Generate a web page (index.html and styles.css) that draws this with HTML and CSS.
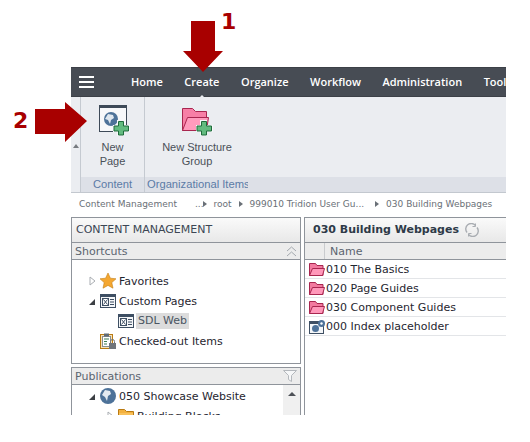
FILE: index.html
```html
<!DOCTYPE html>
<html>
<head>
  <meta charset="UTF-8">
  <title>Create tab</title>
  <link rel="stylesheet" href="styles.css">
</head>
<body>
  <svg class="callout callout-down" width="40" height="51" viewBox="0 0 40 51"><path d="M8 0H32V30H40L20 51L0 30H8Z" fill="#a80000"/></svg>
  <div class="callout callout-num-1">1</div>
  <svg class="callout callout-right" width="52" height="40" viewBox="0 0 52 40"><path d="M0 7H30V0L52 19L30 40V32H0Z" fill="#a80000"/></svg>
  <div class="callout callout-num-2">2</div>

  <div class="app">
    <div class="topbar">
      <div class="burger"><span></span><span></span><span></span></div>
      <div class="nav">
        <span>Home</span>
        <span class="nav-active">Create</span>
        <span>Organize</span>
        <span>Workflow</span>
        <span>Administration</span>
        <span>Tools</span>
      </div>
    </div>

    <div class="ribbon">
      <div class="ribbon-scroll"><div class="scroll-up"></div></div>
      <div class="group group-content">
        <div class="group-main">
          <div class="ribbon-btn">
            <svg width="32" height="31" viewBox="0 0 32 31">
              <rect x="0.5" y="0.5" width="27" height="26" fill="#f7f8fa" stroke="#3e4a58"/>
              <rect x="0" y="0" width="28" height="3" fill="#3e4a58"/>
              <circle cx="12" cy="14" r="7" fill="#4d7299"/>
              <path d="M9 9l5 1 1 3-3 2-1 4-2-4-3-1z" fill="#dfe7ef"/>
              <path d="M18 15h7v5h6v7h-6v4h-7v-4h-4v-7h4z" fill="#f7f8fa"/>
              <path d="M19.500 16.500h5v4.500h5v5h-5v4h-5v-4h-4.500v-5h4.500z" fill="#62bb7f" stroke="#1f6b3c"/>
            </svg>
            <div class="btn-label">New<br>Page</div>
          </div>
        </div>
        <div class="group-label">Content</div>
      </div>
      <div class="group group-org">
        <div class="group-main">
          <div class="ribbon-btn btn-wide">
            <svg width="32" height="31" viewBox="0 0 32 31">
              <path d="M0.500 3.500h10l3 3h11v19h-24z" fill="#f77fa6" stroke="#a8264f"/>
              <path d="M0.500 25.500l5-13h21l-2 13z" fill="#ff9bbd" stroke="#a8264f"/>
              <path d="M18 15h7v5h6v7h-6v4h-7v-4h-4v-7h4z" fill="#f7f8fa"/>
              <path d="M19.500 16.500h5v4.500h5v5h-5v4h-5v-4h-4.500v-5h4.500z" fill="#62bb7f" stroke="#1f6b3c"/>
            </svg>
            <div class="btn-label">New Structure<br>Group</div>
          </div>
        </div>
        <div class="group-label">Organizational Items</div>
      </div>
      <div class="group group-rest">
        <div class="group-main"></div>
        <div class="group-label"></div>
      </div>
    </div>

    <div class="crumbs">
      <span class="crumb-root">Content Management</span>
      <span class="crumb-more">...</span><i class="crumb-arrow"></i>
      <span>root</span><i class="crumb-arrow"></i>
      <span class="crumb-long">999010 Tridion User Gu...</span><i class="crumb-arrow"></i>
      <span>030 Building Webpages</span>
    </div>

    <div class="panels">
      <div class="left">
        <div class="box box-shortcuts">
          <div class="box-title">CONTENT MANAGEMENT</div>
          <div class="box-head">
            <span>Shortcuts</span>
            <svg width="11" height="11" viewBox="0 0 11 11" fill="none" stroke="#a3a8ae"><path d="M1 5l4.500-4 4.500 4M1 10l4.500-4 4.500 4"/></svg>
          </div>
          <div class="tree tree-shortcuts">
            <div class="node">
              <svg class="twist" width="7" height="10" viewBox="0 0 7 10"><path d="M1 1l5 4-5 4z" fill="#fff" stroke="#a9adb2"/></svg>
              <svg class="ico" width="16" height="16" viewBox="0 0 16 16"><path d="M8 0l2.400 5.200 5.600 0.600-4.200 3.800 1.200 5.600L8 12.400 3 15.200l1.200-5.600L0 5.800l5.600-0.600z" fill="#f4a731" stroke="#c47f16" stroke-width="0.600"/></svg>
              <span>Favorites</span>
            </div>
            <div class="node">
              <svg class="twist" width="7" height="10" viewBox="0 0 7 10"><path d="M6 3v6H0z" fill="#3c3f44"/></svg>
              <svg class="ico" width="16" height="14" viewBox="0 0 16 14"><rect x="0.500" y="0.500" width="15" height="13" fill="#f4f6f8" stroke="#3e4f63"/><rect width="16" height="3" fill="#3e4f63"/><rect x="2.500" y="4.500" width="6" height="7" fill="#fff" stroke="#3e4f63"/><path d="M3.500 5.500l4 5M7.500 5.500l-4 5" stroke="#3e4f63"/><path d="M10 5.500h4M10 8h4M10 10.500h4" stroke="#3e4f63"/></svg>
              <span>Custom Pages</span>
            </div>
            <div class="node node-child">
              <svg class="ico" width="16" height="14" viewBox="0 0 16 14"><rect x="0.500" y="0.500" width="15" height="13" fill="#f4f6f8" stroke="#3e4f63"/><rect width="16" height="3" fill="#3e4f63"/><rect x="2.500" y="4.500" width="6" height="7" fill="#fff" stroke="#3e4f63"/><path d="M3.500 5.500l4 5M7.500 5.500l-4 5" stroke="#3e4f63"/><path d="M10 5.500h4M10 8h4M10 10.500h4" stroke="#3e4f63"/></svg>
              <span class="node-selected">SDL Web</span>
            </div>
            <div class="node node-last">
              <span class="twist"></span>
              <svg class="ico" width="16" height="16" viewBox="0 0 16 16"><rect x="0.500" y="1.500" width="12" height="14" fill="#f6e3b8" stroke="#b97a12"/><rect x="2.500" y="3.500" width="8" height="10" fill="#fff" stroke="#8a8d91"/><rect x="4" y="0.500" width="5" height="3" fill="#5f6a75"/><path d="M4 6h5M4 8.500h3M4 11h3" stroke="#3c7d55"/><rect x="9" y="10" width="7" height="6" fill="#70757b"/><path d="M10.500 10V8.500a2 2 0 0 1 4 0V10" fill="none" stroke="#70757b"/></svg>
              <span>Checked-out Items</span>
            </div>
          </div>
        </div>

        <div class="box box-pubs">
          <div class="box-head">
            <span>Publications</span>
            <svg width="14" height="12" viewBox="0 0 14 12"><path d="M0.500 0.500h13L8.500 5.500v6l-3-2v-4z" fill="#f6f7f8" stroke="#b4b8bd"/></svg>
          </div>
          <div class="pubs-body">
            <div class="tree tree-pubs">
              <div class="node">
                <svg class="twist" width="7" height="10" viewBox="0 0 7 10"><path d="M6 3v6H0z" fill="#3c3f44"/></svg>
                <svg class="ico" width="16" height="16" viewBox="0 0 16 16"><circle cx="8" cy="8" r="8" fill="#4d7299"/><path d="M5 2l5 1 1 3-3 2-1 5-2-4-3-2z" fill="#e3eaf1"/></svg>
                <span>050 Showcase Website</span>
              </div>
              <div class="node node-sub">
                <svg class="twist" width="7" height="10" viewBox="0 0 7 10"><path d="M1 1l5 4-5 4z" fill="#fff" stroke="#a9adb2"/></svg>
                <svg class="ico" width="16" height="14" viewBox="0 0 16 14"><path d="M0.500 0.500h6l2 2h7v11h-15z" fill="#f3b13f" stroke="#b97a12"/><path d="M1 5h14" stroke="#ffd27a"/></svg>
                <span>Building Blocks</span>
              </div>
            </div>
            <div class="scrollbar"><div class="scrollbar-up"></div></div>
          </div>
        </div>
      </div>

      <div class="right">
        <div class="box-title list-title">
          <span>030 Building Webpages</span>
          <svg width="14" height="14" viewBox="0 0 14 14" fill="none" stroke="#a9adb2" stroke-width="1.400"><path d="M2 9.500A5.500 5.500 0 0 1 10.500 2.500M12 4.500A5.500 5.500 0 0 1 3.500 11.500"/><path d="M10.500 0.500v3h-3M3.500 13.500v-3h3" stroke-width="1"/></svg>
        </div>
        <div class="box-head list-head">
          <span class="col-icon"></span>
          <span class="col-name">Name</span>
        </div>
        <div class="row">
          <svg class="row-ico" width="16" height="13" viewBox="0 0 16 13"><path d="M0.500 0.500h6l1.500 2h6v10h-13.500z" fill="#f27a9f" stroke="#a8264f"/><path d="M0.500 12.500l3-7h12l-2 7z" fill="#ff98ba" stroke="#a8264f"/></svg>
          <span>010 The Basics</span>
        </div>
        <div class="row">
          <svg class="row-ico" width="16" height="13" viewBox="0 0 16 13"><path d="M0.500 0.500h6l1.500 2h6v10h-13.500z" fill="#f27a9f" stroke="#a8264f"/><path d="M0.500 12.500l3-7h12l-2 7z" fill="#ff98ba" stroke="#a8264f"/></svg>
          <span>020 Page Guides</span>
        </div>
        <div class="row">
          <svg class="row-ico" width="16" height="13" viewBox="0 0 16 13"><path d="M0.500 0.500h6l1.500 2h6v10h-13.500z" fill="#f27a9f" stroke="#a8264f"/><path d="M0.500 12.500l3-7h12l-2 7z" fill="#ff98ba" stroke="#a8264f"/></svg>
          <span>030 Component Guides</span>
        </div>
        <div class="row">
          <svg class="row-ico" width="16" height="14" viewBox="0 0 16 14"><rect x="0.500" y="1.500" width="14" height="12" fill="#f4f6f8" stroke="#3e4f63"/><rect y="1" width="15" height="3" fill="#3e4f63"/><circle cx="6.500" cy="8.500" r="3.500" fill="#4d7299"/><circle cx="12.500" cy="3.500" r="3.500" fill="#4d7299"/><circle cx="12.500" cy="3.500" r="1.200" fill="#fff"/></svg>
          <span>000 Index placeholder</span>
        </div>
      </div>
    </div>
  </div>
</body>
</html>
```

FILE: styles.css
```css
body {
  margin: 0;
  width: 530px;
  height: 442px;
  background: #fff;
  overflow: hidden;
  position: relative;
  font-family: "DejaVu Sans", sans-serif;
}

/* red annotations sit on top of the screenshot */
.callout {
  position: absolute;
  z-index: 5;
  color: #a80000;
  font-weight: bold;
  font-size: 22px;
  line-height: 24px;
}
.callout-down { left: 183px; top: 21px; }
.callout-right { left: 35px; top: 102px; }
.callout-num-1 { left: 221px; top: 10px; }
.callout-num-2 { left: 13px; top: 109px; }

.app {
  position: absolute;
  left: 71px;
  top: 67px;
  width: 435px;
  height: 348px;
  overflow: hidden;
}

.topbar {
  height: 30px;
  background: #474c54;
  display: flex;
  align-items: center;
  box-sizing: border-box;
  border-top: 1px solid #3c4047;
  border-bottom: 1px solid #3c4047;
}
.burger {
  flex: none;
  margin-left: 8px;
  width: 15px;
  display: flex;
  flex-direction: column;
  gap: 3px;
}
.burger span {
  height: 2px;
  background: #fff;
}
.nav {
  margin-left: 37px;
  display: flex;
  gap: 21.500px;
  color: #fff;
  font-family: "Open Sans", sans-serif;
  font-size: 11px;
  font-weight: 600;
  white-space: nowrap;
  position: relative;
  top: -1px;
}
.nav-active {
  position: relative;
}
.nav-active::after {
  content: "";
  position: absolute;
  left: 50%;
  margin-left: -5px;
  top: 21px;
  border: 5px solid transparent;
  border-top: 0;
  border-bottom-color: #ebedf1;
}

.ribbon {
  height: 96px;
  display: flex;
  background: #ebedf1;
  border-bottom: 1px solid #c3c8cf;
  box-sizing: border-box;
}
.ribbon-scroll {
  width: 10px;
  border-right: 1px solid #c5cad1;
  display: flex;
  align-items: flex-end;
  justify-content: center;
  padding-bottom: 44px;
  box-sizing: border-box;
}
.scroll-up {
  border: 3px solid transparent;
  border-top: 0;
  border-bottom: 4px solid #777b80;
}
.group {
  display: flex;
  flex-direction: column;
}
.group-content {
  width: 63px;
  border-right: 1px solid #c5cad1;
}
.group-org {
  width: 103px;
}
.group-rest {
  flex: 1;
}
.group-main {
  flex: 1;
}
.group-label {
  height: 15px;
  line-height: 15px;
  background: #dde0e7;
  color: #5b7ba6;
  font-family: "Liberation Sans", sans-serif;
  font-size: 11.200px;
  text-align: center;
  white-space: nowrap;
}
.group-org .group-label {
  text-align: left;
  padding-left: 2px;
}
.ribbon-btn {
  padding-top: 8px;
  text-align: center;
}
.ribbon-btn svg {
  display: block;
  margin: 0 auto 0 18px;
}
.btn-wide svg {
  margin-left: 37px;
}
.btn-wide {
  width: 104px;
}
.btn-label {
  margin-top: 4px;
  font-family: "Liberation Sans", sans-serif;
  font-size: 11px;
  line-height: 14px;
  color: #4a5058;
}

.crumbs {
  height: 21px;
  display: flex;
  align-items: center;
  gap: 7px;
  padding-left: 8px;
  color: #6a7077;
  font-family: "DejaVu Sans", sans-serif;
  font-size: 9px;
  white-space: nowrap;
}
.crumb-root {
  margin-right: 11px;
}
.crumb-more {
  margin-right: -8px;
}
.crumb-long {
  margin-right: 4px;
}
.crumb-arrow {
  border: 3px solid transparent;
  border-right: 0;
  border-left: 4px solid #6a7077;
}

.panels {
  margin-top: 3px;
  display: flex;
  gap: 3px;
}
.left {
  width: 230px;
  flex: none;
}
.box {
  border: 1px solid #8f949b;
  box-sizing: border-box;
}
.box-shortcuts {
  height: 147px;
}
.box-pubs {
  margin-top: 3px;
  height: 60px;
}
.box-title {
  height: 25px;
  line-height: 24px;
  box-sizing: border-box;
  padding-left: 4px;
  background: linear-gradient(to bottom, #fafafa, #e8e8e8);
  border-bottom: 1px solid #8f949b;
  color: #3c4654;
  font-size: 11px;
  white-space: nowrap;
}
.box-head {
  height: 17px;
  box-sizing: border-box;
  padding: 0 3px;
  background: #ececec;
  border-bottom: 1px solid #8f949b;
  color: #5b6470;
  font-size: 11px;
  display: flex;
  align-items: center;
  justify-content: space-between;
}
.tree {
  font-size: 11px;
  color: #1f2630;
  white-space: nowrap;
}
.tree-shortcuts {
  padding-top: 11px;
}
.node {
  height: 20px;
  display: flex;
  align-items: center;
  padding-left: 17px;
}
.twist {
  width: 7px;
  flex: none;
  margin-right: 4px;
}
.ico {
  margin-right: 3px;
  flex: none;
}
.node-child {
  padding-left: 46px;
  height: 19px;
}
.node-last {
  margin-top: 1px;
}
.node-selected {
  background: #dcdcdc;
  color: #4a5562;
  padding: 0 2px;
  line-height: 16px;
  margin-left: -1px;
}
.node-sub {
  padding-left: 35px;
}
.pubs-body {
  display: flex;
  justify-content: space-between;
}
.tree-pubs {
  padding-top: 1px;
}
.scrollbar {
  width: 17px;
  height: 40px;
  background: #f0f0f0;
  display: flex;
  justify-content: center;
  padding-top: 7px;
  box-sizing: border-box;
}
.scrollbar-up {
  border: 4px solid transparent;
  border-top: 0;
  border-bottom: 4px solid #4d5157;
  height: 0;
}

.right {
  flex: none;
  width: 260px;
  height: 220px;
  border-left: 1px solid #8f949b;
  border-top: 1px solid #8f949b;
  box-sizing: border-box;
}
.list-title {
  display: flex;
  align-items: center;
  gap: 6px;
  font-weight: bold;
  font-size: 11px;
  padding-left: 8px;
  color: #2e3a48;
}
.list-head {
  justify-content: flex-start;
  padding: 0;
}
.col-icon {
  width: 19px;
  height: 100%;
  border-right: 1px solid #c9cbce;
}
.col-name {
  padding-left: 5px;
}
.row {
  height: 19px;
  box-sizing: border-box;
  border-bottom: 1px solid #e3e5e8;
  padding-top: 1px;
  display: flex;
  align-items: center;
  padding-left: 4px;
  font-size: 11px;
  color: #1f2630;
  white-space: nowrap;
}
.row-ico {
  flex: none;
  margin-right: 1px;
}
```
